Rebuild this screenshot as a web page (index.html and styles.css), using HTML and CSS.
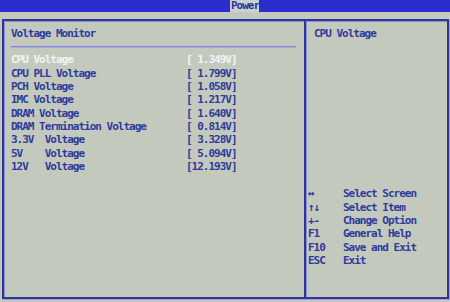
FILE: index.html
```html
<!DOCTYPE html>
<html lang="en">
<head>
	<meta charset="UTF-8">
	<title>Power</title>
	<link rel="stylesheet" href="styles.css">
</head>
<body>
	<div class="top-bar">
		<span class="tab">Power</span>
	</div>
	<div class="panel">
		<section class="main">
			<div class="title">Voltage Monitor</div>
			<div class="rule"></div>
			<div class="rows">
				<div class="row active"><span>CPU Voltage</span><span>[ 1.349V]</span></div>
				<div class="row"><span>CPU PLL Voltage</span><span>[ 1.799V]</span></div>
				<div class="row"><span>PCH Voltage</span><span>[ 1.058V]</span></div>
				<div class="row"><span>IMC Voltage</span><span>[ 1.217V]</span></div>
				<div class="row"><span>DRAM Voltage</span><span>[ 1.640V]</span></div>
				<div class="row"><span>DRAM Termination Voltage</span><span>[ 0.814V]</span></div>
				<div class="row"><span>3.3V  Voltage</span><span>[ 3.328V]</span></div>
				<div class="row"><span>5V    Voltage</span><span>[ 5.094V]</span></div>
				<div class="row"><span>12V   Voltage</span><span>[12.193V]</span></div>
			</div>
		</section>
		<section class="side">
			<div class="side-title">CPU Voltage</div>
			<div class="keys">
				<span>&#8596;</span><span>Select Screen</span>
				<span>&#8593;&#8595;</span><span>Select Item</span>
				<span>+-</span><span>Change Option</span>
				<span>F1</span><span>General Help</span>
				<span>F10</span><span>Save and Exit</span>
				<span>ESC</span><span>Exit</span>
			</div>
		</section>
	</div>
</body>
</html>
```

FILE: styles.css
```css
*{padding: 0;margin: 0;}
*,*:after,*:before{box-sizing:border-box;}
html,body{height: 100%;width: 100%;}
body{
	background: #c3cabd;
	font-family: "DejaVu Sans Mono", "Liberation Mono", monospace;
	font-weight: bold;
	font-size: 11px;
	letter-spacing: -1px;
	line-height: 13.33px;
	color: #2f3a9c;
	overflow: hidden;
}
.top-bar{
	height: 12px;
	background: #2a2ccb;
	display: flex;
}
.tab{
	margin-left: 230px;
	width: 29px;
	height: 12px;
	line-height: 12px;
	background: #c9cfd3;
	color: #2a3590;
	padding-left: 1px;
}
.panel{
	margin: 7px 0 0 2px;
	width: 447px;
	height: 280px;
	border: 2px solid #2f3590;
	box-shadow: inset 1px 1px 0 #8a92d6, 1px 1px 0 #9aa0dc;
	display: grid;
	grid-template-columns: 302px 1fr;
}
.main{
	border-right: 2px solid #2f3590;
	box-shadow: 1px 0 0 #8a92d6;
	padding: 6px 8px 0 7px;
}
.title{
	height: 13.33px;
}
.rule{
	margin-top: 6px;
	height: 1px;
	background: #7e86d2;
	box-shadow: 0 1px 0 #a6acd8;
}
.rows{
	margin-top: 6px;
}
.row{
	display: grid;
	grid-template-columns: 175px 1fr;
	white-space: pre;
}
.row.active{
	color: #f2f4f4;
}
.side{
	padding: 6px 0 0 8px;
}
.keys{
	margin-top: 147px;
	margin-left: -6px;
	display: grid;
	grid-template-columns: 35px 1fr;
}
```
